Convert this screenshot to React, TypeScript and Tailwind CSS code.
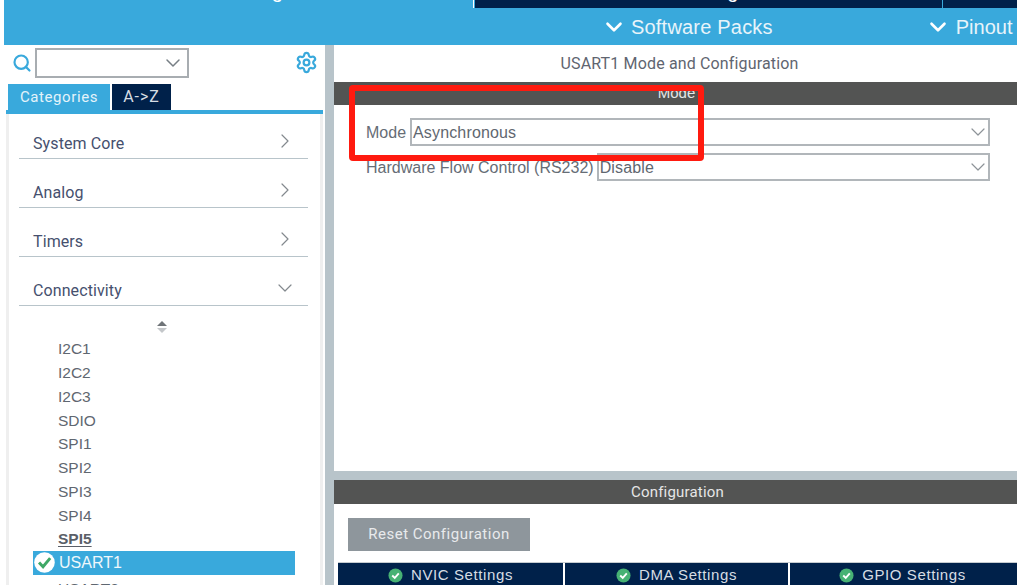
import React from 'react';
import { ChevronDown, ChevronRight, Search, Settings } from 'lucide-react';

const categories = ['System Core', 'Analog', 'Timers', 'Connectivity'];
const peripherals = ['I2C1', 'I2C2', 'I2C3', 'SDIO', 'SPI1', 'SPI2', 'SPI3', 'SPI4'];

const CheckBadge: React.FC<{ size: number; className?: string }> = ({ size, className = '' }) => (
  <svg width={size} height={size} viewBox="0 0 20 20" className={className}>
    <circle cx="10" cy="10" r="9.8" fill="#ffffff" />
    <path d="M4.8 10 L8.6 14 L15.4 5.8" fill="none" stroke="#3fa866" strokeWidth="2.8" />
  </svg>
);

const TabBadge: React.FC = () => (
  <svg width="15" height="15" viewBox="0 0 16 16" className="shrink-0">
    <circle cx="8" cy="8" r="7.5" fill="#47b274" />
    <path d="M4.5 8 L7.2 10.6 L11.5 5.8" fill="none" stroke="#ffffff" strokeWidth="2" />
  </svg>
);

const SelectField: React.FC<{ value: string; className?: string }> = ({ value, className = '' }) => (
  <div className={`flex h-[28px] items-center justify-between border-2 border-[#b1b6ba] pl-[1px] ${className}`}>
    <span className="pt-[1px] text-[16px] tracking-[0.15px] text-[#5f6770]">{value}</span>
    <ChevronDown size={24} strokeWidth={1.2} className="-mr-[2px] text-[#8d9398]" />
  </div>
);

const BottomTab: React.FC<{ label: string; className: string }> = ({ label, className }) => (
  <div className={`flex items-center justify-center gap-[8px] bg-[#00214a] pt-[1px] ${className}`}>
    <TabBadge />
    <span className="text-[15px] tracking-[0.6px] text-[#d6dde4]">{label}</span>
  </div>
);

export default function App() {
  return (
    <div className="relative flex h-[585px] w-[1017px] flex-col overflow-hidden bg-white font-['Liberation_Sans',sans-serif]">
      {/* header */}
      <div className="ml-[4px] flex h-[45px] flex-col bg-[#39a9dc]">
        <div className="flex h-[8px] overflow-hidden">
          <div className="w-[470px] border-r border-white">
            <span className="-mt-[21px] ml-[221px] block text-[20px] leading-[24px] text-white">Configuration</span>
          </div>
          <div className="ml-[1px] flex w-[467px] bg-[#00214a]">
            <span className="-mt-[21px] ml-[150px] text-[20px] leading-[24px] text-white">Clock Configuration</span>
          </div>
          <div className="ml-[1px] flex-1 bg-[#00214a]" />
        </div>
        <div className="flex h-[37px] items-center pt-[1px] text-[20px] text-[#e8f4fa]">
          <ChevronDown size={26} strokeWidth={2.4} className="ml-[597px] text-white" />
          <span className="ml-[4px] tracking-[0.2px]">Software Packs</span>
          <ChevronDown size={26} strokeWidth={2.4} className="ml-[152px] text-white" />
          <span className="ml-[5px]">Pinout</span>
        </div>
      </div>

      <div className="flex min-h-0 flex-1">
        {/* left sidebar */}
        <div className="flex w-[325px] shrink-0 flex-col">
          <div className="flex h-[33px] shrink-0 items-center pl-[12px] pt-[2px]">
            <Search size={20} strokeWidth={2.6} className="text-[#39a9dc]" />
            <div className="ml-[3px] flex h-[30px] w-[154px] items-center justify-end border-2 border-[#a8adb1] pr-[2px]">
              <ChevronDown size={24} strokeWidth={1.5} className="text-[#777f85]" />
            </div>
            <Settings size={23} strokeWidth={2.3} className="ml-[106px] -mt-[1px] text-[#39a9dc]" />
          </div>
          <div className="ml-[8px] mt-[6px] flex h-[26px] shrink-0 font-['Roboto',sans-serif] text-[16px]">
            <div className="flex w-[102px] items-center justify-center bg-[#39a9dc] text-[15px] tracking-[0.6px] text-[#e4f3fa]">Categories</div>
            <div className="ml-[2px] flex w-[59px] items-center justify-center bg-[#00214a] tracking-[0.9px] text-[#d6dde4]">A-&gt;Z</div>
          </div>
          <div className="ml-[6px] h-[4px] w-[317px] shrink-0 bg-[#39a9dc]" />
          <div className="ml-[6px] mr-[2px] flex-1 border-x-[3px] border-[#efefef] pl-[10px] pr-[12px]">
            <div className="flex flex-col gap-[15px] pt-[11px]">
              {categories.map((name, i) => (
                <div key={name} className="flex h-[34px] items-center justify-between border-b border-[#b8c4ca] pl-[14px] pr-[11px] pt-[4px]">
                  <span className="font-['Roboto',sans-serif] text-[16px] tracking-[0.1px] text-[#46506e]">{name}</span>
                  {i === 3 ? (
                    <ChevronDown size={24} strokeWidth={1.2} className="-mt-[6px] text-[#83898e]" />
                  ) : (
                    <ChevronRight size={24} strokeWidth={1.2} className="-mt-[5px] text-[#83898e]" />
                  )}
                </div>
              ))}
            </div>
            <div className="flex h-[27px] flex-col items-center justify-end">
              <svg width="10" height="12" viewBox="0 0 10 12" className="-ml-[3px]">
                <path d="M5 0 L10 5 L0 5 Z" fill="#6f7478" />
                <path d="M5 12 L10 7 L0 7 Z" fill="#c4c7ca" />
              </svg>
            </div>
            <div className="pl-[39px] pt-[4px] text-[15.5px] text-[#5f6770]">
              {peripherals.map((name) => (
                <div key={name} className="flex h-[23.75px] items-center">{name}</div>
              ))}
              <div className="flex h-[23.75px] items-center font-bold text-[#5a5f68] underline underline-offset-2">SPI5</div>
            </div>
            <div className="ml-[14px] flex h-[24px] w-[262px] shrink-0 items-center bg-[#39a9dc] pl-[1px]">
              <CheckBadge size={21} />
              <span className="ml-[4px] text-[16px] text-[#eef7fb]">USART1</span>
            </div>
            <div className="pl-[39px] pt-[2px] text-[15.5px] text-[#5f6770]">USART2</div>
          </div>
        </div>

        {/* splitter */}
        <div className="w-[9px] shrink-0 bg-[#b8c4ca]" />

        {/* main panel */}
        <div className="flex min-w-0 flex-1 flex-col">
          <div className="flex h-[37px] shrink-0 items-center justify-center pl-[8px] pt-[1px] text-[16px] text-[#5f6570]">
            <span className="font-['Roboto',sans-serif] tracking-[0.15px]">USART1 Mode and Configuration</span>
          </div>
          <div className="flex h-[23px] shrink-0 items-center justify-center bg-[#535453] pl-[2px] text-[15px] text-[#e6e6e6]">Mode</div>
          <div className="h-[366px] shrink-0 pl-[32px] pr-[27px] pt-[13px]">
            <div className="flex items-center">
              <span className="pt-[1px] text-[16px] text-[#666d76]">Mode</span>
              <SelectField value="Asynchronous" className="ml-[4px] flex-1" />
            </div>
            <div className="mt-[7px] flex items-center">
              <span className="pt-[1px] text-[16px] text-[#666d76]">Hardware Flow Control (RS232)</span>
              <SelectField value="Disable" className="ml-[3px] flex-1" />
            </div>
          </div>
          <div className="h-[9px] shrink-0 bg-[#b8c4ca]" />
          <div className="flex h-[24px] shrink-0 items-center justify-center bg-[#535453] pl-[4px] font-['Roboto',sans-serif] text-[15px] tracking-[0.2px] text-[#e6e6e6]">Configuration</div>
          <div className="ml-[14px] mt-[14px] flex h-[33px] w-[182px] shrink-0 items-center justify-center bg-[#8e969c] font-['Roboto',sans-serif] text-[15px] tracking-[0.5px] text-[#e8eaec]">Reset Configuration</div>
          <div className="ml-[4px] mt-[11px] flex flex-1 border-t border-[#c6ccd0]">
            <BottomTab label="NVIC Settings" className="w-[225px]" />
            <BottomTab label="DMA Settings" className="ml-[2px] w-[223px]" />
            <BottomTab label="GPIO Settings" className="ml-[2px] flex-1 pr-[2px]" />
          </div>
        </div>
      </div>

      {/* annotation */}
      <div className="absolute left-[349px] top-[85px] h-[76px] w-[355px] rounded-[4px] border-[6px] border-[#ff1a0f]" />
    </div>
  );
}
